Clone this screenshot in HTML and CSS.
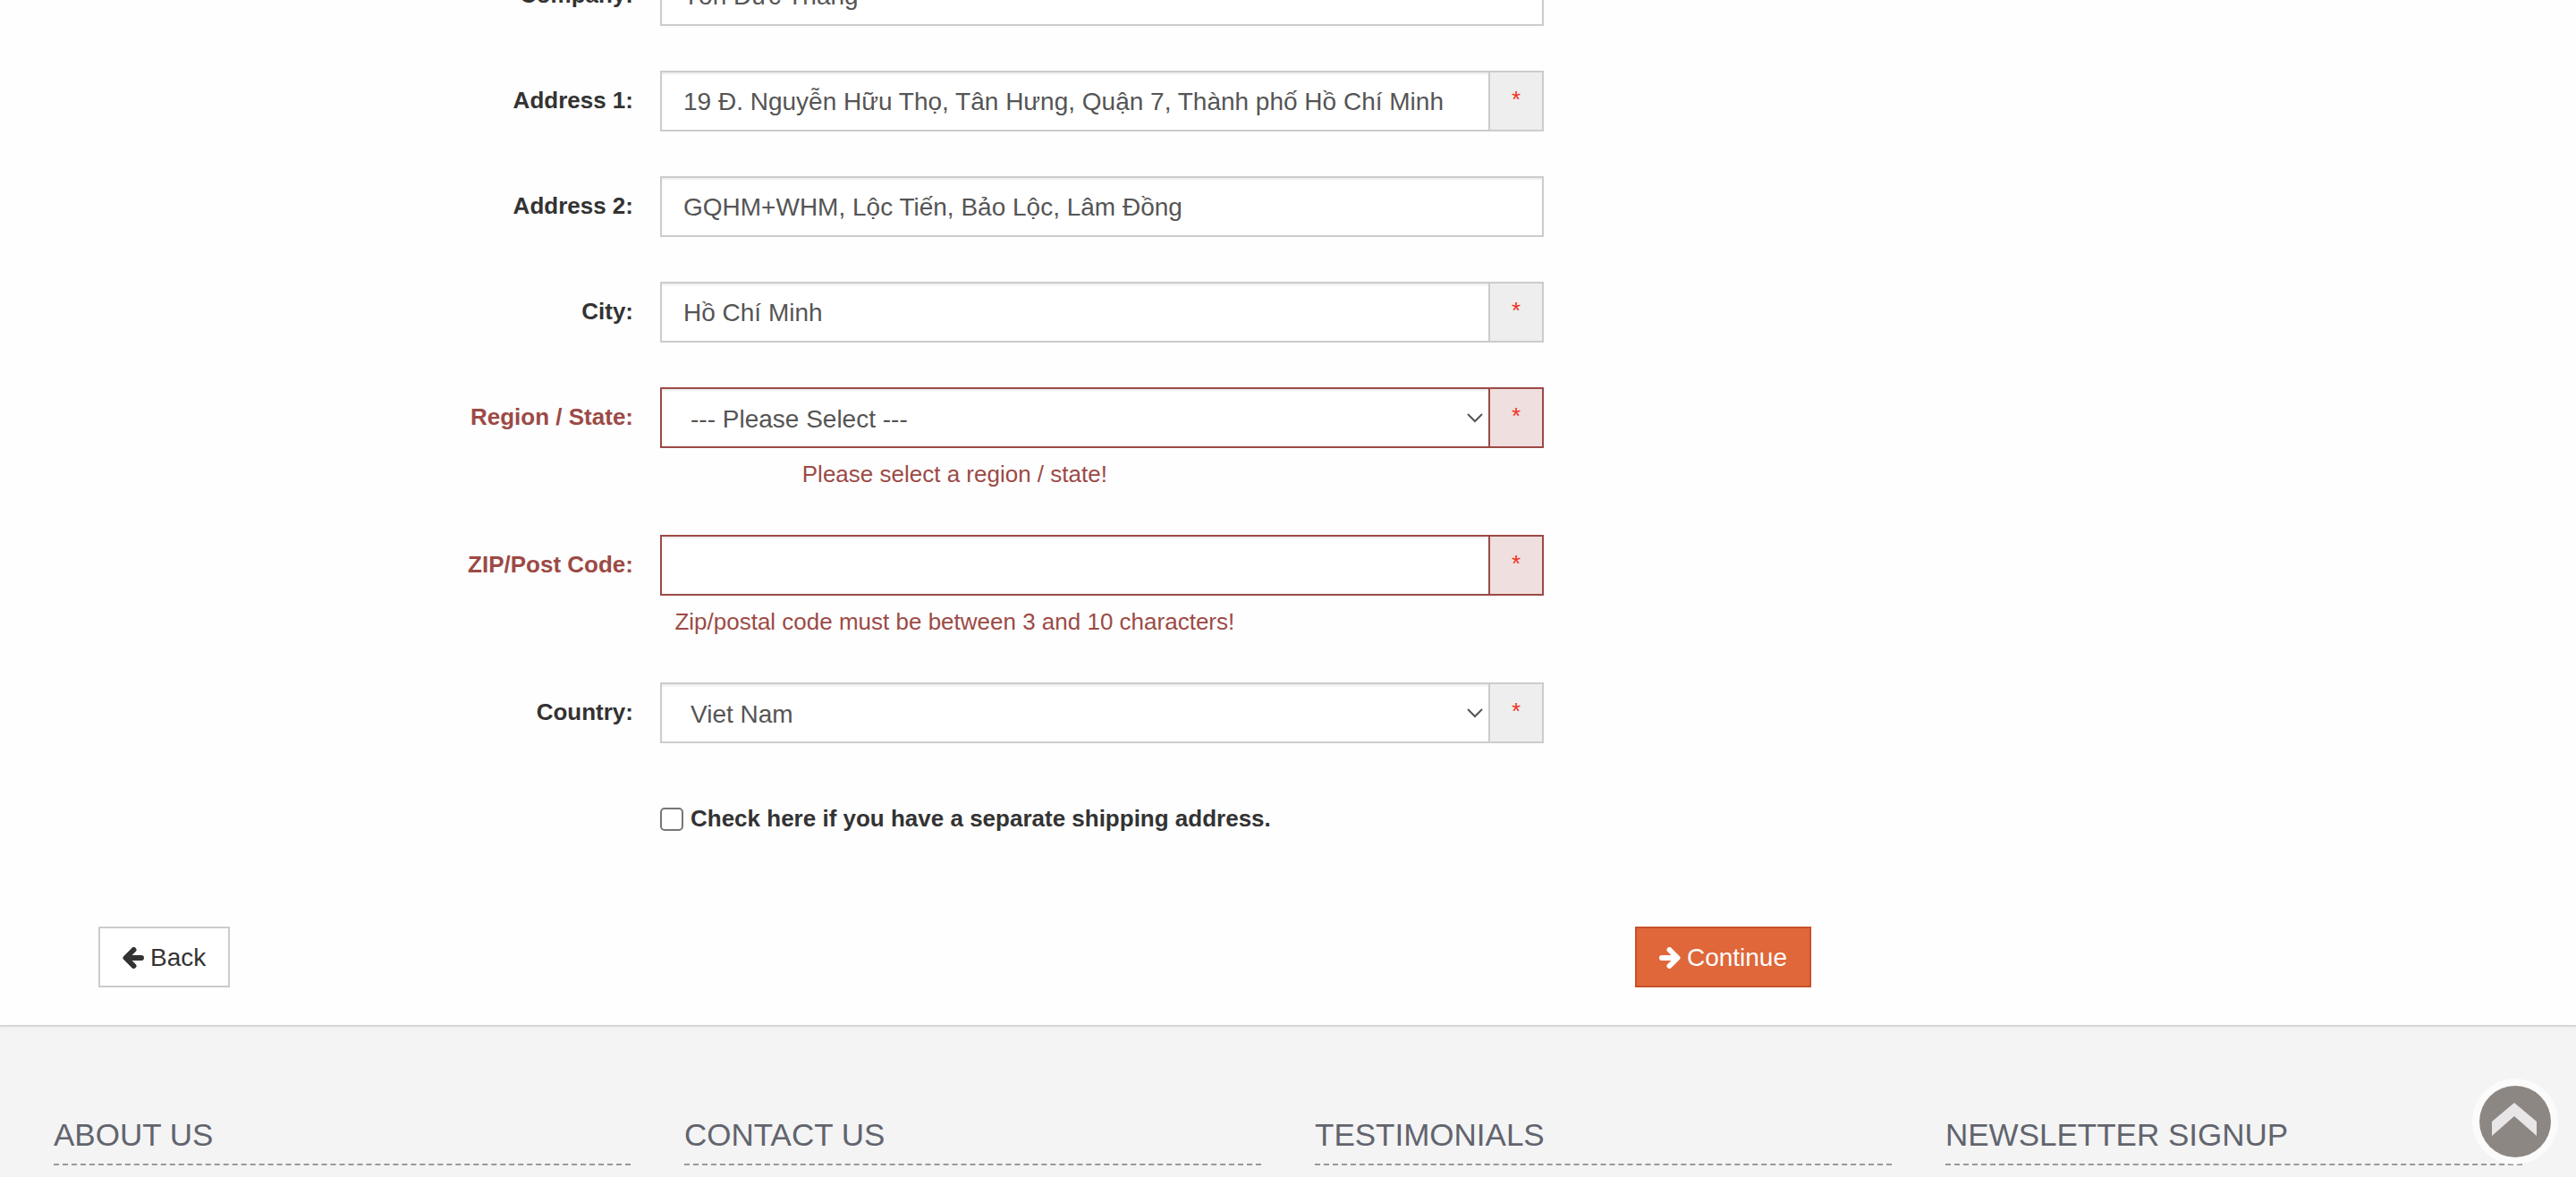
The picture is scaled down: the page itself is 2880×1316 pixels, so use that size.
FILE: index.html
```html
<!DOCTYPE html>
<html lang="en">
<head>
<meta charset="utf-8">
<title>Checkout - Billing Address</title>
<link rel="stylesheet" href="styles.css">
</head>
<body>
<main class="main">
  <form class="checkout">
    <div class="row">
      <label class="row-label" for="company">Company:</label>
      <div class="field"><input class="control" id="company" type="text" value="Tôn Đức Thắng"></div>
    </div>
    <div class="row">
      <label class="row-label" for="address1">Address 1:</label>
      <div class="field">
        <input class="control" id="address1" type="text" value="19 Đ. Nguyễn Hữu Thọ, Tân Hưng, Quận 7, Thành phố Hồ Chí Minh">
        <span class="required">*</span>
      </div>
    </div>
    <div class="row">
      <label class="row-label" for="address2">Address 2:</label>
      <div class="field"><input class="control" id="address2" type="text" value="GQHM+WHM, Lộc Tiến, Bảo Lộc, Lâm Đồng"></div>
    </div>
    <div class="row">
      <label class="row-label" for="city">City:</label>
      <div class="field">
        <input class="control" id="city" type="text" value="Hồ Chí Minh">
        <span class="required">*</span>
      </div>
    </div>
    <div class="row has-error">
      <label class="row-label" for="zone">Region / State:</label>
      <div class="field">
        <div class="select-wrap">
          <select class="control" id="zone"><option>--- Please Select ---</option></select>
          <svg class="caret" viewBox="0 0 18 12" aria-hidden="true"><path d="M1 2l8 8 8-8"/></svg>
        </div>
        <span class="required">*</span>
      </div>
      <p class="help">Please select a region / state!</p>
    </div>
    <div class="row has-error">
      <label class="row-label" for="postcode">ZIP/Post Code:</label>
      <div class="field">
        <input class="control" id="postcode" type="text" value="">
        <span class="required">*</span>
      </div>
      <p class="help">Zip/postal code must be between 3 and 10 characters!</p>
    </div>
    <div class="row">
      <label class="row-label" for="country">Country:</label>
      <div class="field">
        <div class="select-wrap">
          <select class="control" id="country"><option>Viet Nam</option></select>
          <svg class="caret" viewBox="0 0 18 12" aria-hidden="true"><path d="M1 2l8 8 8-8"/></svg>
        </div>
        <span class="required">*</span>
      </div>
    </div>
    <div class="row">
      <label class="check"><input class="checkbox" type="checkbox"><span>Check here if you have a separate shipping address.</span></label>
    </div>
    <div class="actions">
      <button class="btn" type="button">
        <svg class="arrow" viewBox="0 0 24 24" aria-hidden="true"><path d="M12.500 3L3.500 12l9 9M5 12h16"/></svg>
        Back
      </button>
      <button class="btn btn-primary" type="submit">
        <svg class="arrow" viewBox="0 0 24 24" aria-hidden="true"><path d="M11.500 3l9 9-9 9M19 12H3"/></svg>
        Continue
      </button>
    </div>
  </form>
</main>
<footer class="footer">
  <h2 class="footer-title">About Us</h2>
  <h2 class="footer-title">Contact Us</h2>
  <h2 class="footer-title">Testimonials</h2>
  <h2 class="footer-title">Newsletter Signup</h2>
</footer>
<a class="to-top" href="#" aria-label="Back to top">
  <svg viewBox="0 0 96 96" aria-hidden="true">
    <circle class="to-top-halo" cx="48" cy="48" r="48"/>
    <circle class="to-top-disc" cx="48" cy="48" r="40"/>
    <path class="to-top-chevron" d="M47 27l25 21v16L47 42 22 64V48z"/>
  </svg>
</a>
</body>
</html>
```
FILE: styles.css
```css
* {
  box-sizing: border-box;
}

body {
  margin: 0;
  overflow-x: hidden;
  background: #fefefe;
  color: #333;
  font: 26px/36px "Liberation Sans", Arial, Helvetica, sans-serif;
}

.main {
  display: flow-root;
  width: 75%;
  padding: 0 135px 42px 110px;
  overflow: hidden;
}

/* The first row is scrolled partly out of view. */
.checkout {
  margin-top: -39px;
}

.row {
  display: grid;
  grid-template-columns: 628fr 988fr 299fr;
  margin-bottom: 50px;
}

.row-label {
  padding: 15px 30px 0 0;
  font-weight: bold;
  text-align: right;
}

.field {
  display: flex;
  height: 68px;
}

.select-wrap {
  position: relative;
  display: flex;
  flex: 1;
}

.control {
  flex: 1;
  min-width: 0;
  height: 68px;
  padding: 2px 24px 0;
  border: 2px solid #ccc;
  border-radius: 0;
  background: #fff;
  box-shadow: inset 0 2px 2px rgba(0, 0, 0, 0.075);
  color: #555;
  font: inherit;
  font-size: 28px;
  appearance: none;
}

select.control {
  padding: 3px 32px 0;
}

.caret {
  position: absolute;
  top: 28px;
  right: 6px;
  width: 18px;
  height: 12px;
  fill: none;
  stroke: #555;
  stroke-width: 2;
}

.required {
  width: 62px;
  padding-top: 12px;
  border: 2px solid #ccc;
  background: #eee;
  color: #ee3223;
  text-align: center;
}

.field:has(.required) .control {
  border-right: 0;
}

.help {
  grid-column: 2;
  width: 66.666%;
  height: 47px;
  margin: 0;
  padding-top: 11px;
  text-align: center;
  white-space: nowrap;
}

.has-error {
  color: #9c4a46;
}

.has-error .control,
.has-error .required {
  border-color: #9c4a46;
}

.has-error .required {
  background: #efdfdf;
}

.check {
  display: flex;
  grid-column: 2;
  gap: 8px;
  align-items: center;
  padding-top: 16px;
  font-weight: bold;
  white-space: nowrap;
}

.checkbox {
  width: 26px;
  height: 26px;
  margin: 2px 0 0;
  border: 2px solid #767676;
  border-radius: 5px;
  background: #fff;
  appearance: none;
}

.actions {
  display: flex;
  justify-content: space-between;
  padding-top: 53px;
}

.btn {
  display: flex;
  align-items: center;
  gap: 7px;
  height: 68px;
  padding: 2px 25px 0;
  border: 2px solid #ccc;
  background: #fff;
  color: #333;
  font: inherit;
  font-size: 28px;
}

.btn-primary {
  border-color: #c8502a;
  background: #e0673a;
  color: #fff;
}

.arrow {
  width: 24px;
  height: 24px;
  fill: none;
  stroke: currentColor;
  stroke-width: 6;
  stroke-linecap: round;
  stroke-linejoin: round;
}

.footer {
  display: grid;
  grid-template-columns: repeat(4, 1fr);
  gap: 60px;
  padding: 100px 60px 13px;
  border-top: 2px solid #d6d6d6;
  background: #f4f4f4;
  box-shadow: inset 0 2px 2px rgba(0, 0, 0, 0.02);
}

.footer-title {
  margin: 0;
  padding: 5px 0 16px;
  border-bottom: 2px dashed #999;
  color: #62646e;
  font-size: 35px;
  font-weight: normal;
  line-height: 32px;
  text-transform: uppercase;
  white-space: nowrap;
}

.to-top {
  position: fixed;
  right: 20px;
  bottom: 14px;
  width: 96px;
  height: 96px;
}

.to-top-halo {
  fill: rgba(255, 255, 255, 0.6);
}

.to-top-disc {
  fill: #8d8783;
}

.to-top-chevron {
  fill: #e8e6e7;
}
```
